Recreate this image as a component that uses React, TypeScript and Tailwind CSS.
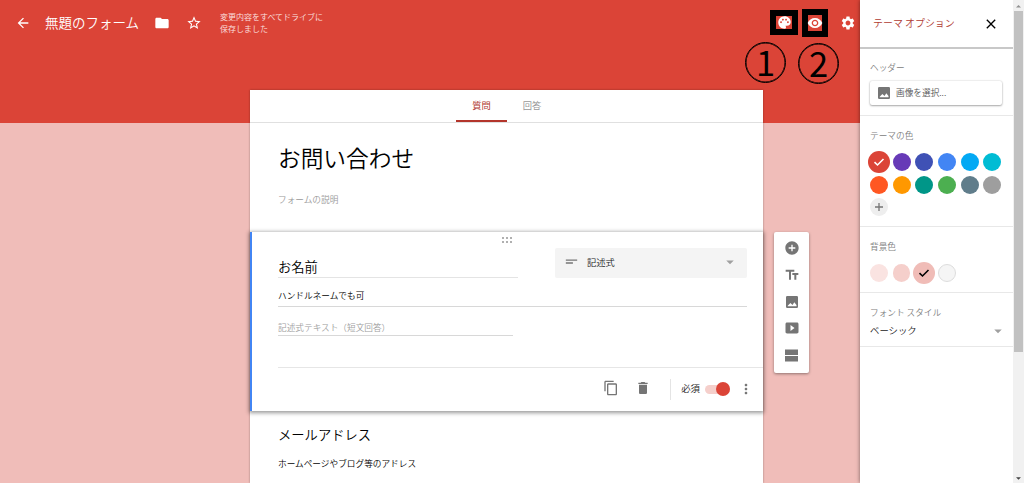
import React from "react";
import {
  MdAddCircle,
  MdArrowBack,
  MdArrowDropDown,
  MdClose,
  MdContentCopy,
  MdDelete,
  MdFolder,
  MdMoreVert,
  MdPalette,
  MdSettings,
  MdShortText,
  MdStarBorder,
  MdTextFields,
  MdVisibility,
} from "react-icons/md";

function PhotoIcon({ className }: { className: string }) {
  return (
    <svg viewBox="0 0 12 12" className={className} fill="currentColor">
      <path
        fillRule="evenodd"
        d="M1.2 0h9.6A1.2 1.2 0 0 1 12 1.2v9.6a1.2 1.2 0 0 1-1.2 1.2H1.2A1.2 1.2 0 0 1 0 10.8V1.2A1.2 1.2 0 0 1 1.2 0zM1.7 10.200h8.800V9L8.300 6.300 6.500 8.900 4.400 7 1.700 9.800z"
      />
    </svg>
  );
}

function VideoIcon() {
  return (
    <svg viewBox="0 0 14 12" className="h-[12px] w-[14px]" fill="currentColor">
      <path
        fillRule="evenodd"
        d="M2.2.5h9.6C13 .5 13.5 1.2 13.5 2.2v7.6c0 1-.5 1.7-1.7 1.7H2.2C1 11.500.5 10.800.5 9.800V2.200C.5 1.200 1 .5 2.200.5zM5.500 3v6L9.500 6z"
      />
    </svg>
  );
}

function SectionIcon() {
  return (
    <svg viewBox="0 0 13 13" className="h-[13px] w-[13px]" fill="currentColor">
      <path d="M0 .5h13v5.500H0zM0 7h13v5.500H0z" />
    </svg>
  );
}

function CheckIcon() {
  return (
    <svg viewBox="0 0 12 12" className="size-[12px]" fill="none" stroke="currentColor" strokeWidth="1.600">
      <path d="M1.500 6.200 4.500 9 10.500 3" />
    </svg>
  );
}

function PlusIcon() {
  return (
    <svg viewBox="0 0 12 12" className="size-[12px]" fill="none" stroke="currentColor" strokeWidth="1.300">
      <path d="M6 2v8M2 6h8" />
    </svg>
  );
}

const themeColors = [
  "bg-[#673ab7]",
  "bg-[#3f51b5]",
  "bg-[#4285f4]",
  "bg-[#03a9f4]",
  "bg-[#00bcd4]",
  "bg-[#ff5722]",
  "bg-[#ff9800]",
  "bg-[#009688]",
  "bg-[#4caf50]",
  "bg-[#607d8b]",
  "bg-[#9e9e9e]",
];

function Cell({ children }: { children: React.ReactNode }) {
  return <div className="flex h-[22.7px] w-[22.7px] items-center justify-center">{children}</div>;
}

function Header() {
  return (
    <header className="relative flex h-[90px] items-start text-white">
      <div className="flex h-[46px] items-center">
        <MdArrowBack className="ml-[15px] size-4" />
        <h1 className="ml-[14px] w-[95px] pb-[2px] text-[13.500px] leading-[20px] font-[350]">無題のフォーム</h1>
        <MdFolder className="ml-[13.500px] size-4" />
        <MdStarBorder className="ml-[16px] size-4" />
        <p className="ml-[18.500px] w-[110px] text-[8px] leading-[12.500px] font-[350] text-[#fbe3e1]">
          変更内容をすべてドライブに
          <br />
          保存しました
        </p>
      </div>
      <div className="ml-auto flex h-[46px] items-center">
        <div className="mb-[1px] flex h-[25px] w-[28px] items-center justify-center border-[6px] border-black">
          <MdPalette className="size-[15px] shrink-0" />
        </div>
        <div className="ml-[4px] flex h-[28px] w-[26px] items-center justify-center border-[6px] border-black">
          <MdVisibility className="size-4 shrink-0" />
        </div>
        <MdSettings className="mr-[4.500px] ml-[11.500px] size-4" />
      </div>
      <div className="absolute top-[42px] left-[745px] flex size-[41px] items-center justify-center rounded-full border border-black pb-[3px] text-[34.500px] leading-[34px] text-black ring-[0.500px] ring-black ring-inset">
        1
      </div>
      <div className="absolute top-[43px] left-[798px] flex size-[41px] items-center justify-center rounded-full border border-black pb-[3px] text-[34.500px] leading-[34px] text-black ring-[0.500px] ring-black ring-inset">
        2
      </div>
    </header>
  );
}

function QuestionCard() {
  return (
    <section className="relative z-10 flex h-[179px] shrink-0 flex-col border-l-2 border-[#4285f4] bg-white pl-[26px] shadow-[0_1px_4px_1px_rgba(0,0,0,0.4)]">
      <div className="flex h-[16px] justify-center pt-[5px] pr-[28px]">
        <div className="grid h-[6px] grid-cols-3 gap-x-[2px] gap-y-[2px]">
          {[0, 1, 2, 3, 4, 5].map((i) => (
            <span key={i} className="size-[2px] bg-[#b0b0b0]" />
          ))}
        </div>
      </div>
      <div className="mr-4 flex h-[30px] items-end justify-between">
        <div className="h-[20px] w-[240px] border-b border-[#e4e4e4] text-[13.300px] leading-[18px] font-[350] text-black">
          お名前
        </div>
        <div className="flex h-[30px] w-[192px] items-center rounded-[2px] bg-[#f4f4f4] pr-[8px] pb-px pl-[8px]">
          <MdShortText className="mb-[2px] size-[17px] text-[#757575]" />
          <span className="ml-[7px] text-[9.300px] font-[350]">記述式</span>
          <MdArrowDropDown className="mb-px ml-auto size-[18px] text-[#a0a0a0]" />
        </div>
      </div>
      <div className="mt-[9px] mr-4 h-[20px] border-b border-[#d8d8d8] text-[8.670px] leading-[16px] font-[350] text-black">
        ハンドルネームでも可
      </div>
      <div className="mt-[13px] h-[16px] w-[235px] border-b border-[#d8d8d8] text-[8.670px] leading-[15px] font-[350] text-[#a0a0a0]">
        記述式テキスト（短文回答）
      </div>
      <div className="mt-[31px] flex h-[43px] items-center justify-end border-t border-[#e6e6e6] text-[#757575]">
        <MdContentCopy className="mb-[2px] size-4" />
        <MdDelete className="mb-[2px] ml-[16px] size-4" />
        <div className="ml-[19px] h-[21px] w-px bg-[#e4e4e4]" />
        <span className="ml-[10px] pb-px text-[9.400px] font-[350] text-[#222]">必須</span>
        <div className="ml-[5px] flex h-[9px] w-[25px] items-center justify-end rounded-full bg-[#f5cfcb]">
          <span className="size-[14px] shrink-0 rounded-full bg-[#db4437]" />
        </div>
        <MdMoreVert className="mr-[9.500px] mb-px ml-[7.500px] size-4" />
      </div>
    </section>
  );
}

function FormColumn() {
  return (
    <main className="flex h-[393px] w-[513px] flex-col bg-white shadow-[0_0_2px_rgba(0,0,0,0.35)]">
      <nav className="flex h-[33px] shrink-0 border-b border-[#e0e0e0] pl-[206px] text-[9.300px] leading-[30px]">
        <span className="h-[32px] w-[51px] border-b-2 border-[#b3352b] text-center text-[#b03a31]">
          質問
        </span>
        <span className="w-[50px] text-center text-[#999]">回答</span>
      </nav>
      <div className="h-[109px] shrink-0 pl-[28px]">
        <h2 className="pt-[17px] text-[22.700px] leading-[36px] font-[350] text-black">お問い合わせ</h2>
        <p className="mt-[15px] text-[8.670px] leading-[16px] font-[350] text-[#999]">フォームの説明</p>
      </div>
      <QuestionCard />
      <div className="pt-[14px] pl-[28px]">
        <h3 className="text-[13.300px] leading-[20px] font-[350] text-black">メールアドレス</h3>
        <p className="mt-[10px] text-[8.670px] leading-[16px] font-[350] text-black">
          ホームページやブログ等のアドレス
        </p>
      </div>
    </main>
  );
}

function ThemePanel() {
  return (
    <aside className="z-20 flex w-[153px] flex-col bg-white text-[8.670px] font-[350] text-[#808080] shadow-[0_0_4px_rgba(0,0,0,0.5)]">
      <div className="flex h-[49px] shrink-0 items-center border-b-2 border-[#c8c8c8] pl-[13px]">
        <span className="text-[9.950px] text-[#b03a31]">テーマ オプション</span>
        <MdClose className="mr-[14.500px] ml-auto size-4 text-black" />
      </div>
      <div className="h-[67px] border-b border-[#e8e8e8] pt-[10px] pl-[10px]">
        <div className="leading-[16px]">ヘッダー</div>
        <div className="mt-[6px] flex h-[24px] w-[132px] items-center rounded-[2px] bg-white pl-[8px] text-[#555] shadow-[0_0_2px_rgba(0,0,0,0.2),0_1px_2px_rgba(0,0,0,0.3)]">
          <PhotoIcon className="size-[12px] text-[#757575]" />
          <span className="ml-[6px] pb-px">画像を選択...</span>
        </div>
      </div>
      <div className="h-[111px] border-b border-[#e8e8e8] pt-[11px]">
        <div className="pl-[10px] leading-[16px]">テーマの色</div>
        <div className="mt-[7.500px] ml-[7.500px] grid w-[136.200px] grid-cols-6">
          <Cell>
            <span className="flex size-[21.500px] shrink-0 items-center justify-center rounded-full bg-[#db4437] text-white">
              <CheckIcon />
            </span>
          </Cell>
          {themeColors.map((c) => (
            <Cell key={c}>
              <span className={`size-[18px] rounded-full ${c}`} />
            </Cell>
          ))}
          <Cell>
            <span className="flex size-[17.500px] items-center justify-center rounded-full bg-[#eee] text-[#757575]">
              <PlusIcon />
            </span>
          </Cell>
        </div>
      </div>
      <div className="h-[65.500px] border-b border-[#e8e8e8] pt-[11px]">
        <div className="pl-[10px] leading-[16px]">背景色</div>
        <div className="mt-[7.500px] ml-[7.500px] flex">
          <Cell>
            <span className="size-[17.500px] rounded-full bg-[#fae3e1]" />
          </Cell>
          <Cell>
            <span className="size-[17.500px] rounded-full bg-[#f5cfcb]" />
          </Cell>
          <Cell>
            <span className="flex size-[21.500px] shrink-0 items-center justify-center rounded-full bg-[#f0bcb7] text-black">
              <CheckIcon />
            </span>
          </Cell>
          <Cell>
            <span className="size-[18px] rounded-full border border-[#ddd] bg-[#f5f5f5]" />
          </Cell>
        </div>
      </div>
      <div className="h-[54.500px] border-b border-[#e8e8e8] pt-[11px] pr-[6px] pl-[10px]">
        <div className="leading-[16px]">フォント スタイル</div>
        <div className="mt-[3px] flex h-[16px] items-center justify-between text-[9.400px] text-[#222]">
          ベーシック
          <MdArrowDropDown className="size-[18px] text-[#a0a0a0]" />
        </div>
      </div>
    </aside>
  );
}

function Scrollbar() {
  return (
    <div className="z-20 flex w-[11px] flex-col items-center bg-[#f1f1f1]">
      <svg viewBox="0 0 11 11" className="h-[11px] w-[11px]">
        <path d="M3 7.500 5.500 5 8 7.500z" fill="#909090" />
      </svg>
      <div className="h-[341px] w-[9px] bg-[#c1c1c1]" />
      <svg viewBox="0 0 11 11" className="mt-auto h-[9px] w-[11px]">
        <path d="M2.500 4 5.500 7 8.500 4z" fill="#444" />
      </svg>
    </div>
  );
}

export default function App() {
  return (
    <div className="flex h-[483px] w-[1024px] overflow-hidden bg-[linear-gradient(#db4437_123px,#f0bdb9_123px)] font-['Noto_Sans_CJK_JP',sans-serif] text-[#212121]">
      <div className="w-[860px]">
        <Header />
        <div className="flex items-start pl-[250px]">
          <FormColumn />
          <div className="mt-[142px] ml-[11px] flex h-[141px] w-[35px] flex-col items-center rounded-[2px] bg-white pt-[3px] text-[#757575] shadow-[0_1px_3px_rgba(0,0,0,0.4)]">
            <div className="flex h-[26.700px] items-center">
              <MdAddCircle className="size-4" />
            </div>
            <div className="flex h-[26.700px] items-center">
              <MdTextFields className="size-4" />
            </div>
            <div className="flex h-[26.700px] items-center">
              <PhotoIcon className="size-[12px]" />
            </div>
            <div className="flex h-[26.700px] items-center">
              <VideoIcon />
            </div>
            <div className="flex h-[26.700px] items-center">
              <SectionIcon />
            </div>
          </div>
        </div>
      </div>
      <ThemePanel />
      <Scrollbar />
    </div>
  );
}
